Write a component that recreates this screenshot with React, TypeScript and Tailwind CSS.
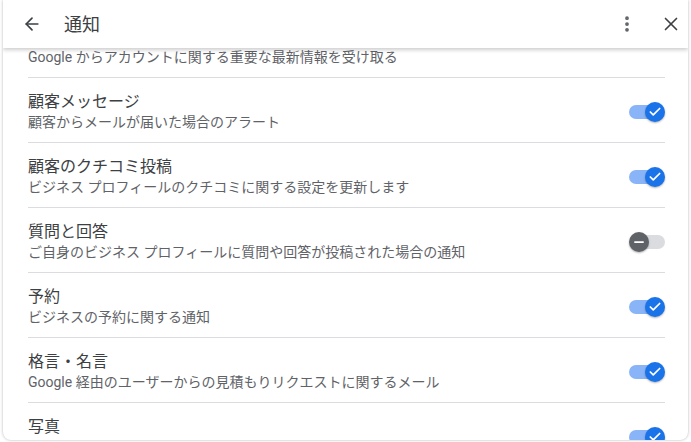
import { ArrowLeft, X, EllipsisVertical, Check, Minus } from "lucide-react";

interface Setting {
  title: string;
  desc: string;
  on: boolean;
}

const settings: Setting[] = [
  { title: "顧客メッセージ", desc: "顧客からメールが届いた場合のアラート", on: true },
  { title: "顧客のクチコミ投稿", desc: "ビジネス プロフィールのクチコミに関する設定を更新します", on: true },
  { title: "質問と回答", desc: "ご自身のビジネス プロフィールに質問や回答が投稿された場合の通知", on: false },
  { title: "予約", desc: "ビジネスの予約に関する通知", on: true },
  { title: "格言・名言", desc: "Google 経由のユーザーからの見積もりリクエストに関するメール", on: true },
  { title: "写真", desc: "ご自身のビジネス プロフィールの写真に関するヒントと最新情報", on: true },
];

const Toggle = ({ on }: { on: boolean }) => (
  <div className="relative w-[36px] h-[20px] shrink-0">
    <div
      className={
        on
          ? "absolute left-0 right-[2px] top-[3px] h-[14px] rounded-full bg-[#8ab4f8]"
          : "absolute left-[2px] right-0 top-[3px] h-[14px] rounded-full bg-[#dadce0]"
      }
    />
    {on ? (
      <div className="absolute right-0 top-0 w-[20px] h-[20px] rounded-full bg-[#1a73e8] shadow-[0_1px_2px_rgba(0,0,0,0.3)] flex items-center justify-center">
        <Check size={14} strokeWidth={3} className="text-white" />
      </div>
    ) : (
      <div className="absolute left-0 top-0 w-[20px] h-[20px] rounded-full bg-[#5f6368] shadow-[0_1px_2px_rgba(0,0,0,0.3)] flex items-center justify-center">
        <Minus size={14} strokeWidth={3} className="text-white" />
      </div>
    )}
  </div>
);

export default function App() {
  return (
    <div
      className="w-[691px] h-[442px] bg-white overflow-hidden"
      style={{ fontFamily: 'Roboto, "Noto Sans CJK JP", sans-serif' }}
    >
      <div className="ml-[3px] w-[685px] h-[440px] bg-white rounded-b-lg shadow-[0_0_3px_rgba(0,0,0,0.3)] flex flex-col overflow-hidden">
        <div className="relative z-10 h-[48px] shrink-0 bg-white shadow-[0_2px_4px_rgba(0,0,0,0.2)] flex items-center pl-[19px] pr-[6px]">
          <ArrowLeft size={20} strokeWidth={2} className="text-[#3c4043]" />
          <span className="ml-[22px] text-[18px] text-[#3c4043]">通知</span>
          <div className="ml-auto flex items-center gap-[23px]">
            <EllipsisVertical size={20} strokeWidth={2.5} className="text-[#5f6368]" />
            <X size={22} strokeWidth={1.8} className="text-[#3c4043]" />
          </div>
        </div>
        <div className="-mt-[1px] pl-[25px] pr-[23px]">
          <div className="border-b border-[#dadce0] pb-[10px]">
            <div className="text-[14px] leading-[20px] text-[#5f6368] whitespace-nowrap">
              Google からアカウントに関する重要な最新情報を受け取る
            </div>
          </div>
          {settings.map((s) => (
            <div
              key={s.title}
              className="flex items-center border-b border-[#dadce0] pt-[14px] pb-[10px]"
            >
              <div className="flex-1 min-w-0">
                <div className="text-[16px] leading-[20px] text-[#3c4043]">{s.title}</div>
                <div className="text-[14px] leading-[20px] text-[#5f6368] whitespace-nowrap">{s.desc}</div>
              </div>
              <Toggle on={s.on} />
            </div>
          ))}
        </div>
      </div>
    </div>
  );
}
